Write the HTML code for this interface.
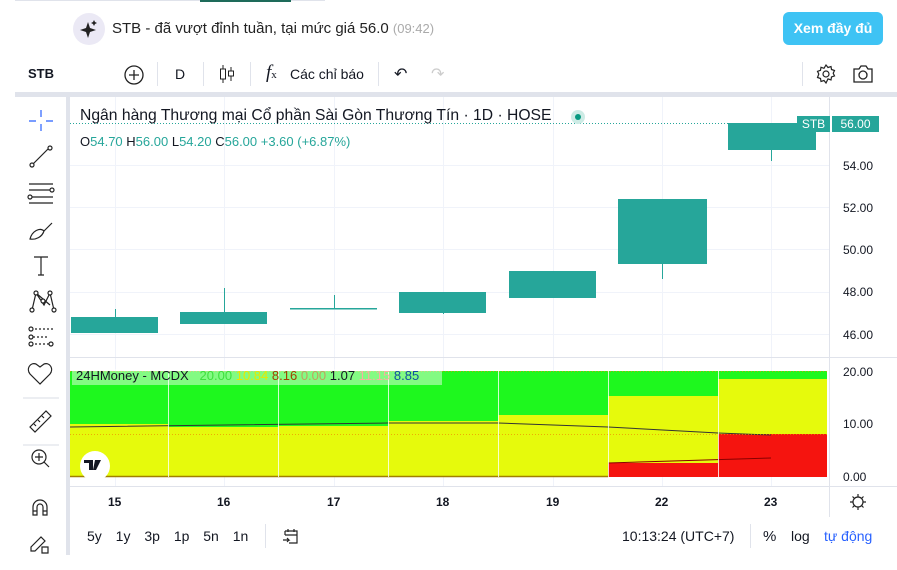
<!DOCTYPE html>
<html><head><meta charset="utf-8"><style>
*{margin:0;padding:0;box-sizing:border-box}
body{width:897px;height:570px;background:#fff;font-family:"Liberation Sans","Noto Sans CJK SC",sans-serif;position:relative;overflow:hidden;color:#131722}
.a{position:absolute}
.t{position:absolute;white-space:nowrap}
</style></head><body>
<div class="a" style="left:15px;top:0;width:310px;height:1px;background:#e0e3eb"></div>
<div class="a" style="left:200px;top:0;width:91px;height:2px;background:#1e6b5a"></div>
<!-- top notice -->
<div class="a" style="left:73px;top:13px;width:32px;height:32px;border-radius:50%;background:#ebe9f5"></div>
<svg class="a" style="left:79px;top:19px" width="20" height="20" viewBox="0 0 20 20"><path d="M9 3 L11 9 L17 11 L11 13 L9 19 L7 13 L1 11 L7 9Z" fill="#222"/><path d="M15 1 L16 3 L18 4 L16 5 L15 7 L14 5 L12 4 L14 3Z" fill="#222"/></svg>
<div class="t" style="left:112px;top:20px;font-size:15px;color:#222">STB - đã vượt đỉnh tuần, tại mức giá 56.0 <span style="color:#aaa;font-size:13px">(09:42)</span></div>
<div class="a" style="left:783px;top:12px;width:100px;height:33px;border-radius:6px;background:#3ec3f4;color:#fff;font-weight:bold;font-size:14px;text-align:center;line-height:33px">Xem đầy đủ</div>
<!-- toolbar -->
<div class="t" style="left:28px;top:66px;font-size:13px;font-weight:bold">STB</div>
<svg class="a" style="left:123px;top:64px" width="22" height="22"><circle cx="11" cy="11" r="9" fill="none" stroke="#222" stroke-width="1.3"/><path d="M11 6v10M6 11h10" stroke="#222" stroke-width="1.3"/></svg>
<div class="a" style="left:157px;top:62px;width:1px;height:24px;background:#e0e3eb"></div>
<div class="t" style="left:175px;top:66px;font-size:14px">D</div>
<div class="a" style="left:203px;top:62px;width:1px;height:24px;background:#e0e3eb"></div>
<svg class="a" style="left:218px;top:63px" width="18" height="22"><path d="M5 2v18M13 4v14" stroke="#222"/><rect x="2.5" y="6" width="5" height="10" fill="#fff" stroke="#222"/><rect x="10.5" y="8" width="5" height="5" fill="#fff" stroke="#222"/></svg>
<div class="a" style="left:250px;top:62px;width:1px;height:24px;background:#e0e3eb"></div>
<div class="t" style="left:266px;top:62px;font-size:19px;font-style:italic;font-family:'Liberation Serif',serif">f<span style="font-size:11px;font-style:normal">x</span></div>
<div class="t" style="left:290px;top:66px;font-size:14px">Các chỉ báo</div>
<div class="a" style="left:378px;top:62px;width:1px;height:24px;background:#e0e3eb"></div>
<div class="t" style="left:394px;top:64px;font-size:16px">↶</div>
<div class="t" style="left:431px;top:64px;font-size:16px;color:#ccc">↷</div>
<div class="a" style="left:802px;top:62px;width:1px;height:24px;background:#e0e3eb"></div>
<svg class="a" style="left:815px;top:63px" width="22" height="22" viewBox="0 0 22 22"><path d="M11 2l2 2.5 3-1 .5 3 3 1-1.3 2.7 1.3 2.7-3 1-.5 3-3-1L11 20l-2-2.5-3 1-.5-3-3-1L3.8 11 2.5 8.3l3-1 .5-3 3 1z" fill="none" stroke="#222" stroke-width="1.2"/><circle cx="11" cy="11" r="3" fill="none" stroke="#222" stroke-width="1.2"/></svg>
<svg class="a" style="left:852px;top:64px" width="22" height="20"><path d="M2 5h5l2-3h5l2 3h4v13H2z" fill="none" stroke="#222" stroke-width="1.3"/><circle cx="11" cy="11" r="4" fill="none" stroke="#222" stroke-width="1.3"/></svg>
<!-- frame -->
<div class="a" style="left:15px;top:92px;width:882px;height:5px;background:#e0e3eb"></div>
<div class="a" style="left:66px;top:95px;width:4px;height:460px;background:#e0e3eb"></div>
<!-- left tools -->
<svg class="a" style="left:0;top:97px" width="66" height="460" stroke="#222" fill="none" stroke-width="1.2">
<path d="M41 13v7M41 27v7M29 24h7M46 24h7" stroke="#2962ff"/>
<path d="M32 68l17-17"/><circle cx="32" cy="68" r="2" fill="#fff"/><circle cx="50" cy="51" r="2" fill="#fff"/>
<path d="M29 87h24M29 93h24M31 100h22M29 106h24"/><circle cx="52" cy="93" r="2" fill="#fff"/><circle cx="30" cy="100" r="2" fill="#fff"/>
<path d="M30 142c2-8 10-12 14-8c-2 6-8 9-14 8zM44 134l8-8"/>
<path d="M34 160h14M41 160v18M38 178h6"/>
<path d="M32 213l4-17 8 12 6-12 4 17M36 196l14 12"/><circle cx="32" cy="213" r="2" fill="#fff"/><circle cx="36" cy="196" r="2" fill="#fff"/><circle cx="50" cy="196" r="2" fill="#fff"/><circle cx="54" cy="213" r="2" fill="#fff"/><circle cx="43" cy="204" r="2" fill="#fff"/>
<path d="M31 232h22M31 247h22M33 240h16" stroke-dasharray="2 2"/><circle cx="31" cy="232" r="2" fill="#fff"/><circle cx="31" cy="240" r="2" fill="#fff"/><circle cx="31" cy="247" r="2" fill="#fff"/><circle cx="51" cy="247" r="2" fill="#fff"/>
<path d="M40 287l-10-10c-4-5 0-12 6-10l4 3 4-3c6-2 10 5 6 10z"/>
<path d="M23 301h36M23 348h36" stroke="#e0e3eb"/>
<path d="M30 330l16-16 5 5-16 16zM34 327l2 2M38 323l2 2M42 319l2 2"/>
<circle cx="39" cy="360" r="7"/><path d="M44 365l5 5M39 356v8M35 360h8"/>
<path d="M33 418v-8a7 7 0 0 1 14 0v8h-4v-8a3 3 0 0 0-6 0v8zM33 414h4M43 414h4"/>
<path d="M31 450l10-10 4 4-10 10h-4zM42 450h6v6h-6z"/>
</svg>
<!-- price pane -->
<svg class="a" style="left:70px;top:97px" width="827" height="420">
<g stroke="#f0f3fa"><path d="M0 68.5h759M0 110.5h759M0 152.5h759M0 195.5h759M0 237.5h759"/><path d="M45.5 0v390M154.5 0v390M264.5 0v390M373.5 0v390M483.5 0v390M592.5 0v390M701.5 0v390"/></g>
<path d="M0 26.5h759" stroke="#26a69a" stroke-dasharray="1 2"/>
<g fill="#26a69a" stroke="#26a69a">
<path d="M45.5 212v8M154.5 191v24M264.5 198v14M373.5 195v22M592.5 150v32M701.5 50v14"/>
<rect x="1" y="220" width="87" height="16" stroke="none"/>
<rect x="110" y="215" width="87" height="12" stroke="none"/>
<rect x="220" y="211" width="87" height="1.5" stroke="none"/>
<rect x="329" y="195" width="87" height="21" stroke="none"/>
<rect x="439" y="174" width="87" height="27" stroke="none"/>
<rect x="548" y="102" width="89" height="65" stroke="none"/>
<rect x="658" y="26" width="88" height="27" stroke="none"/>
</g>
<path d="M759.5 0v420M0 260.5h827M0 389.5h827" stroke="#e0e3eb"/>
<rect x="0" y="274" width="757" height="106" fill="#e6fa0c"/>
<g fill="#1ef81e"><rect x="0" y="274" width="98" height="53"/><rect x="98" y="274" width="110" height="56"/><rect x="208" y="274" width="110" height="55"/><rect x="318" y="274" width="110" height="50"/><rect x="428" y="274" width="110" height="44"/><rect x="538" y="274" width="110" height="25"/><rect x="648" y="274" width="109" height="8"/></g>
<g fill="#f5140f"><rect x="538" y="366" width="110" height="14"/><rect x="648" y="337" width="109" height="43"/></g>
<path d="M0 330L318 326L428 326L538 330L648 336L701 338" stroke="#333" fill="none"/>
<path d="M538 366L701 361" stroke="#800" fill="none"/>
<path d="M0 379.5h538" stroke="#a08000" stroke-width="1.5"/>
<path d="M0 337.5h759M0 274.5h759" stroke="#f08a00" stroke-dasharray="1 2" opacity=".7"/>
<g stroke="#fff" opacity=".8"><path d="M98.5 274v106M208.5 274v106M318.5 274v106M428.5 274v106M538.5 274v106M648.5 274v106"/></g>
<circle cx="25" cy="369" r="15" fill="#fff"/>
<path d="M14 363h9v10h-4v-7h-5zM25 363h6l-5 10h-3z" fill="#131722"/>
<rect x="2" y="272" width="370" height="16" fill="#fff" opacity=".45"/>
</svg>
<div class="t" style="left:80px;top:107px;font-size:15.7px;color:#131722">Ngân hàng Thương mại Cổ phần Sài Gòn Thương Tín · 1D · HOSE</div>
<div class="a" style="left:571px;top:110px;width:14px;height:14px;border-radius:50%;background:#cdebe5"></div>
<div class="a" style="left:575px;top:114px;width:6px;height:6px;border-radius:50%;background:#089981"></div>
<div class="t" style="left:80px;top:134px;font-size:13px;color:#26a69a"><span style="color:#131722">O</span>54.70 <span style="color:#131722">H</span>56.00 <span style="color:#131722">L</span>54.20 <span style="color:#131722">C</span>56.00 +3.60 (+6.87%)</div>
<div class="t" style="left:76px;top:368px;font-size:13px;color:#131722">24HMoney - MCDX &nbsp; <span style="color:#3ee03e">20.00</span> <span style="color:#e8e800">10.84</span> <span style="color:#a04000">8.16</span> <span style="color:#c0a060">0.00</span> 1.07 <span style="color:#f5b0a0">11.15</span> <span style="color:#1050a0">8.85</span></div>
<div class="a" style="left:797px;top:116px;width:33px;height:16px;background:#26a69a;color:#fff;font-size:12px;text-align:center;line-height:16px">STB</div>
<div class="a" style="left:832px;top:116px;width:47px;height:16px;background:#26a69a;color:#fff;font-size:12px;text-align:center;line-height:16px">56.00</div>
<div class="t" style="left:843px;top:159px;font-size:12px">54.00</div>
<div class="t" style="left:843px;top:201px;font-size:12px">52.00</div>
<div class="t" style="left:843px;top:243px;font-size:12px">50.00</div>
<div class="t" style="left:843px;top:285px;font-size:12px">48.00</div>
<div class="t" style="left:843px;top:328px;font-size:12px">46.00</div>
<div class="t" style="left:843px;top:365px;font-size:12px">20.00</div>
<div class="t" style="left:843px;top:417px;font-size:12px">10.00</div>
<div class="t" style="left:843px;top:470px;font-size:12px">0.00</div>
<div class="t" style="left:108px;top:495px;font-size:12px;font-weight:bold">15</div>
<div class="t" style="left:217px;top:495px;font-size:12px;font-weight:bold">16</div>
<div class="t" style="left:327px;top:495px;font-size:12px;font-weight:bold">17</div>
<div class="t" style="left:436px;top:495px;font-size:12px;font-weight:bold">18</div>
<div class="t" style="left:546px;top:495px;font-size:12px;font-weight:bold">19</div>
<div class="t" style="left:655px;top:495px;font-size:12px;font-weight:bold">22</div>
<div class="t" style="left:764px;top:495px;font-size:12px;font-weight:bold">23</div>
<svg class="a" style="left:849px;top:493px" width="18" height="18"><circle cx="9" cy="9" r="5" fill="none" stroke="#222" stroke-width="1.2"/><path d="M9 1v3M9 14v3M1 9h3M14 9h3M3.5 3.5l2 2M12.5 12.5l2 2M3.5 14.5l2-2M12.5 5.5l2-2" stroke="#222" stroke-width="1.2"/></svg>
<div class="t" style="left:87px;top:528px;font-size:14px;word-spacing:10px">5y 1y 3p 1p 5n 1n</div>
<div class="a" style="left:265px;top:524px;width:1px;height:24px;background:#e0e3eb"></div>
<svg class="a" style="left:281px;top:527px" width="18" height="18" fill="none" stroke="#222" stroke-width="1.2"><path d="M4 4h12v12H8M4 4v4M4 8h12M7 2v3M13 2v3M2 13h6l-2-2M8 13l-2 2"/></svg>
<div class="t" style="left:622px;top:528px;font-size:14px">10:13:24 (UTC+7)</div>
<div class="a" style="left:750px;top:524px;width:1px;height:24px;background:#e0e3eb"></div>
<div class="t" style="left:763px;top:528px;font-size:15px">%</div>
<div class="t" style="left:791px;top:528px;font-size:14px">log</div>
<div class="t" style="left:824px;top:528px;font-size:14px;color:#2962ff">tự động</div>
</body></html>
